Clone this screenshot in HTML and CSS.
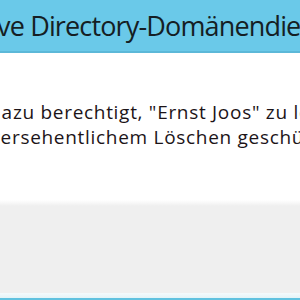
FILE: index.html
```html
<!DOCTYPE HTML>
<html>
<head>
<meta charset="utf-8" />
<title>Active Directory-Domänendienste</title>
<link rel="stylesheet" href="styles.css">
</head>
<body>
<div class="dialog">
	<div class="titlebar">
		<span class="title">Active Directory-Domänendienste</span>
	</div>
	<div class="content">
		<p class="line line1">Sie sind nicht dazu berechtigt, "Ernst Joos" zu löschen.</p>
		<p class="line line2">Das Objekt ist vor versehentlichem Löschen geschützt.</p>
	</div>
	<div class="footer"></div>
	<div class="frame"></div>
</div>
</body>
</html>
```

FILE: styles.css
```css
*{ padding:0; margin:0; border:0; }
html, body{ width:300px; height:300px; overflow:hidden; background:#fff; }
.dialog{ width:300px; height:300px; display:flex; flex-direction:column; overflow:hidden; font-family:"Open Sans", "Noto Sans", sans-serif; }
.titlebar{ height:51px; flex:none; background:#6ac9e9; border-bottom:2px solid #5cb8d8; overflow:hidden; white-space:nowrap; }
.title{ display:block; font-size:27px; letter-spacing:-0.85px; line-height:52px; color:#151e24; margin-left:-46px; }
.content{ height:147px; flex:none; background:#fff; padding-top:47px; box-sizing:border-box; white-space:nowrap; overflow:hidden; }
.line{ font-size:19px; letter-spacing:0.7px; line-height:25px; color:#1c1418; }
.line1{ margin-left:-143px; }
.line2{ margin-left:-184px; }
.footer{ flex:1; background:linear-gradient(#fff, #efefef 6px, #efefef); }
.frame{ height:7px; flex:none; background:linear-gradient(#f4fafc, #e3f2f6 5px, #5fc1df 5px); }
```
